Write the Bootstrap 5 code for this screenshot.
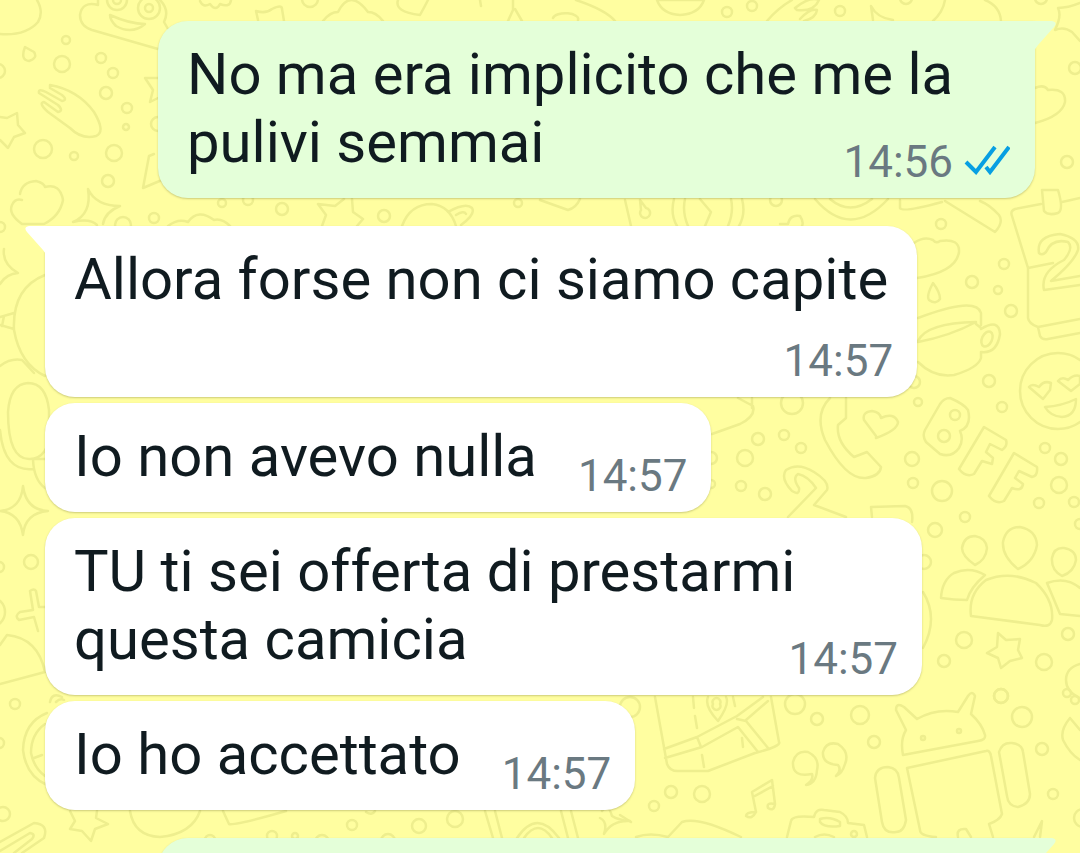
<!DOCTYPE html>
<html lang="it">
<head>
<meta charset="utf-8">
<meta name="viewport" content="width=device-width, initial-scale=1">
<title>Chat</title>
<link rel="stylesheet" href="https://cdn.jsdelivr.net/npm/bootstrap@5.3.0/dist/css/bootstrap.min.css">
<style>
  body { background: #fffea0; font-family: Roboto, "Noto Sans", sans-serif; color: #101b20; }
  .chat { padding: 21px 45px 0; gap: 6px; }
  .wallpaper { z-index: 0; fill: none; stroke: #eeee8e; stroke-width: 2.5; stroke-linejoin: round; stroke-linecap: round; }
  .bubble {
    z-index: 1; padding: 19px 24px 10px 29px; border-radius: 30px;
    max-width: calc(100% - 113px); background: #fff;
    box-shadow: 0 1px 2px rgba(90, 90, 30, .3);
    font-size: 58px; line-height: 68px;
  }
  .bubble-out { background: #e4ffd9; }
  .bubble-out.tailed { border-top-right-radius: 0; }
  .bubble-in.tailed { border-top-left-radius: 0; }
  .tail { top: 0; width: 22px; height: 30px; }
  .bubble-in .tail { right: 100%; margin-right: -2px; fill: #fff; }
  .bubble-out .tail { left: 100%; margin-left: -1px; fill: #e4ffd9; }
  .stamp { font-size: 44px; line-height: 52px; color: #6a7981; }
  .inline-stamp { margin: 28px 0 0 41px; }
  .below-stamp { margin-top: 22px; }
  .stacked p { margin-right: 5px; }
  .turn { margin-top: 22px; }
  .ticks { width: 46px; height: 30px; margin: 0 1px 4px 11px; }
  .upcoming { min-height: 109px; }
</style>
<script src="https://cdn.jsdelivr.net/npm/bootstrap@5.3.0/dist/js/bootstrap.bundle.min.js"></script>
</head>
<body>
<main class="chat position-relative d-flex flex-column align-items-start vh-100 overflow-hidden">

  <svg class="wallpaper position-absolute top-0 start-0 w-100 h-100" viewBox="0 0 1080 853" preserveAspectRatio="xMinYMin slice" aria-hidden="true">
    <!-- scattered bubbles -->
    <g>
      <circle cx="66" cy="40" r="4"/><circle cx="62" cy="64" r="8"/><circle cx="101" cy="58" r="5"/><circle cx="113" cy="73" r="5"/><circle cx="106" cy="93" r="6"/><circle cx="127" cy="108" r="5"/><circle cx="126" cy="127" r="3"/><circle cx="43" cy="149" r="9"/><circle cx="74" cy="156" r="4"/><circle cx="114" cy="153" r="8"/><circle cx="108" cy="181" r="6"/><circle cx="-2" cy="71" r="7"/><circle cx="0" cy="227" r="5"/><circle cx="154" cy="218" r="5"/><circle cx="123" cy="225" r="8"/><circle cx="158" cy="124" r="7"/>
      <circle cx="222" cy="203" r="4"/><circle cx="248" cy="200" r="5"/><circle cx="282" cy="209" r="6"/><circle cx="384" cy="216" r="6"/><circle cx="518" cy="203" r="4"/><circle cx="776" cy="200" r="6"/>
      <circle cx="31" cy="562" r="7"/><circle cx="-1" cy="567" r="5"/><circle cx="-10" cy="612" r="15"/><circle cx="15" cy="704" r="5"/><circle cx="-1" cy="743" r="5"/><circle cx="3" cy="814" r="7"/>
      <circle cx="352" cy="825" r="5"/><ellipse cx="419" cy="826" rx="7" ry="7"/><ellipse cx="455" cy="819" rx="8" ry="8"/><circle cx="272" cy="836" r="5"/><circle cx="295" cy="836" r="3"/><circle cx="322" cy="842" r="7"/><circle cx="388" cy="841" r="7"/><circle cx="210" cy="840" r="5"/>
      <circle cx="310" cy="-1" r="8"/><circle cx="727" cy="12" r="5"/><circle cx="752" cy="6" r="5"/><circle cx="840" cy="11" r="5"/><circle cx="906" cy="-2" r="6"/><circle cx="1041" cy="-2" r="6"/><circle cx="1075" cy="68" r="6"/><circle cx="1067" cy="162" r="6"/>
      <circle cx="941" cy="224" r="5"/><circle cx="1004" cy="264" r="5"/><circle cx="972" cy="282" r="6"/><circle cx="998" cy="290" r="4"/><circle cx="1011" cy="311" r="6"/><circle cx="989" cy="381" r="6"/><circle cx="918" cy="402" r="4"/><circle cx="1002" cy="407" r="5"/><circle cx="914" cy="382" r="6"/>
      <circle cx="792" cy="403" r="11"/><circle cx="758" cy="439" r="6"/><circle cx="784" cy="435" r="5"/><circle cx="801" cy="448" r="5"/><circle cx="745" cy="458" r="8"/><circle cx="741" cy="486" r="5"/><circle cx="765" cy="494" r="6"/><circle cx="711" cy="458" r="6"/><circle cx="711" cy="484" r="4"/><circle cx="912" cy="459" r="7"/><circle cx="913" cy="483" r="5"/><circle cx="942" cy="491" r="10"/><circle cx="965" cy="517" r="5"/><circle cx="935" cy="530" r="7"/><circle cx="1045" cy="448" r="5"/><circle cx="1061" cy="459" r="6"/><circle cx="1059" cy="485" r="8"/><circle cx="1039" cy="503" r="5"/><circle cx="1074" cy="502" r="5"/><circle cx="1080" cy="524" r="5"/>
      <circle cx="924" cy="562" r="7"/><circle cx="964" cy="640" r="8"/><circle cx="944" cy="661" r="6"/><circle cx="1044" cy="662" r="8"/><circle cx="1068" cy="634" r="6"/><circle cx="1001" cy="696" r="7"/><circle cx="1067" cy="693" r="4"/><circle cx="1075" cy="700" r="4"/>
      <circle cx="795" cy="704" r="10"/><circle cx="817" cy="719" r="6"/><circle cx="860" cy="715" r="9"/><circle cx="874" cy="742" r="6"/><circle cx="1001" cy="696" r="7"/><circle cx="1022" cy="717" r="10"/><circle cx="1042" cy="749" r="6"/><circle cx="1053" cy="794" r="5"/><circle cx="630" cy="707" r="10"/><circle cx="671" cy="792" r="6"/><circle cx="654" cy="806" r="5"/><circle cx="702" cy="794" r="8"/><circle cx="1083" cy="818" r="9"/>
    </g>
    <!-- top left: face, hand, star, cloud, sparkle -->
    <path d="M0 34Q26 36 38 22Q44 12 37 0M25 47Q20 60 29 61Q38 58 34 52ZM98 0V5Q82 1 80 15Q80 26 92 30L158 49M110 15Q130 24 145 24Q132 35 116 26Q110 20 110 15ZM160 0Q170 10 164 22L168 29"/>
    <circle cx="117" cy="0" r="10"/><circle cx="117" cy="0" r="4"/><circle cx="149" cy="8" r="11"/><circle cx="149" cy="8" r="4"/>
    <path d="M50 85Q78 90 94 112Q106 132 96 136Q82 140 70 128L48 112Q38 103 44 102L58 112Q64 111 58 105L39 93Q38 88 46 92L62 101Q68 100 62 95L50 88ZM0 117L7 118L17 113L18 125L25 133L14 137L8 148L0 140"/>
    <path d="M158 78H145L153 90L150 102L158 98M154 154L149 156L143 188L162 180M20 194Q22 182 36 181Q44 183 45 187Q60 183 63 200Q60 216 44 224H22Q8 214 12 205Q15 198 22 200M88 189Q96 206 120 206Q105 212 103 224M88 189Q92 214 73 222Q90 218 97 225"/>
    <!-- strip above the first message -->
    <path d="M200 1Q203 8 210 4Q216 12 220 4Q230 8 231 0M258 20L256 11Q266 14 272 9Q282 4 282 9L284 21M323 21Q330 12 338 12Q350-12 368 12Q376 12 383 21M398 0Q394 12 420 15Q424 8 428 0M480 0L481 6M513 0V10L508 21M515 9L522 21M553 18A11 5 0 1 1 578 20M576 0Q606 10 615 21M657 0Q662 14 680 15Q699 14 704 0M657 0H704M767 21Q778 8 792 0M795 8Q810-4 819 0Q814 12 797 10ZM800 19Q810 8 817 10Q816 18 804 21M873 20L871 6Q877 18 893 20M933 21Q943 12 945 0M985 0Q1000 6 1001 21M1080 3Q1068 8 1058 8Q1062 16 1055 30Q1064 26 1072 32L1080 41M1035 88Q1044 84 1048 90Q1066 88 1065 102Q1062 116 1035 123"/>
    <!-- between the first two messages -->
    <path d="M168 226Q178 218 188 222Q198 208 214 220Q222 218 230 226M322 226L326 215L318 204L335 206L344 199M352 199L353 212L363 219L357 226M402 226Q410 204 432 204Q450 206 456 226M448 212Q466 202 472 208Q476 214 461 225M456 215Q464 210 466 214M540 200L568 210Q576 208 580 199M625 200L631 226M640 200L641 210A5 5 0 1 0 646 208ZM674 199Q670 214 677 226M742 199Q746 214 739 226M685 199Q682 212 688 226M731 199Q734 212 728 226M700 199L711 212L705 226M780 224H788Q790 214 800 216Q804 222 802 226M815 199Q850 240 888 199M830 199Q850 216 872 199M900 200V208Q902 213 942 202M945 201L995 232Q1004 222 999 215Q990 205 980 201"/>
    <!-- cloud, drop, cup -->
    <path d="M914 243Q924 236 933 240Q936 244 940 241Q960 238 959 252Q956 272 917 278M933 283Q926 296 929 300Q936 305 940 299Q940 292 933 283ZM918 318Q976 296 981 313V325M918 341Q926 323 976 322Q950 336 918 342M976 324L981 328M918 362Q934 378 954 375Q978 368 981 358V352M981 329Q999 318 1000 334Q997 354 981 352"/>
    <ellipse cx="987" cy="339" rx="5" ry="8" transform="rotate(25 987 339)"/>
    <!-- calendar -->
    <path d="M1041 204L1015 209Q1010 211 1012 216L1028 268V318Q1029 324 1038 327L1040 336Q1042 340 1048 339L1080 333M1028 268L1053 263M1038 327L1080 319M1062 202L1080 198M1042 190H1058Q1064 210 1058 213Q1048 216 1044 211ZM1039 253Q1036 236 1060 234Q1080 238 1078 250Q1074 262 1051 281L1080 276M1080 285L1044 290Q1040 272 1064 260Q1074 248 1068 242Q1052 238 1046 252Q1042 256 1039 253"/>
    <!-- heart-eyed face -->
    <circle cx="1058" cy="391" r="38"/>
    <path d="M1029 387Q1032 383 1039 387Q1044 380 1051 383L1050 390L1043 399ZM1058 381Q1062 376 1068 380Q1074 374 1080 376V384L1071 391ZM1045 407Q1062 406 1076 399Q1076 416 1062 417Q1050 416 1045 407Z"/>
    <!-- phone, heart, BFF, cane -->
    <path d="M712 434L740 424Q756 416 753 406L738 398M752 398V408M830 398Q814 414 825 440Q846 480 866 478Q880 476 881 467L867 452L854 457Q836 442 838 425L846 418V398M876 436L864 420Q862 412 872 411Q880 412 881 418Q894 412 898 422Q898 430 876 438ZM925 430Q922 436 926 442L940 454Q952 458 959 448Q964 440 960 431Q972 426 968 410Q964 404 950 398Q944 398 940 404ZM984 427L1006 440Q1008 446 1002 450L990 444L986 452L993 458L992 464L982 461L974 474Q966 478 959 469ZM1014 453L1037 467Q1038 476 1032 477L1019 471L1015 478L1023 484Q1022 492 1012 488L1004 501Q996 505 989 496ZM788 517L816 488Q808 476 798 474Q792 478 799 488Q800 496 792 491Q780 478 786 470Q798 462 814 472Q830 482 827 490L814 505L846 517M872 517L871 507L905 506Q914 508 912 522"/>
    <circle cx="955" cy="415" r="5"/><circle cx="944" cy="436" r="6"/>
    <!-- people and star -->
    <path d="M975 565Q962 556 962 548Q964 536 975 536Q986 538 987 548Q986 560 975 565ZM1018 569Q1002 556 1003 542Q1006 527 1020 527Q1036 530 1037 545Q1034 562 1018 569ZM1062 576Q1051 570 1052 558Q1054 547 1064 548Q1076 550 1076 560Q1074 572 1062 576ZM941 598Q942 580 954 573Q970 566 985 575Q970 588 967 600Q954 600 941 598ZM971 616Q968 594 986 580Q1010 570 1036 583Q1054 600 1052 620Q1050 628 1040 625ZM1080 588Q1066 576 1047 583L1060 614L1080 616M998 633L1006 640L1020 639L1018 650L1022 658L1010 661L1001 668L998 658L987 653L997 647ZM923 592Q939 618 923 648M1080 664Q1066 668 1066 680Q1066 692 1080 698"/>
    <!-- map -->
    <path d="M655 697L667 764Q670 772 680 771L708 771L755 753Q782 746 779 742L771 697M664 749L697 737L737 716L763 697M665 758L702 747L738 727L758 752M737 719L746 721L768 748M746 720L768 701M697 737L701 747M693 697L694 708M695 716L697 728M733 697L735 706M742 738L743 747M702 755L704 767M708 697Q704 706 718 721Q730 704 726 697M713 704A4 4 0 1 0 720 704A4 4 0 1 0 713 704"/>
    <!-- quotes, notes, camera -->
    <path d="M806 785Q814 780 812 774Q792 778 793 762Q796 750 808 752Q820 758 817 770Q816 784 806 785ZM836 776Q842 770 838 765Q822 764 823 752Q826 741 838 744Q850 752 845 764Q842 774 836 776ZM756 812L752 792L772 780L775 804M753 797L773 786M756 812Q746 812 746 816Q752 820 756 812M775 804Q766 802 768 808Q774 812 775 804M636 837Q650 832 668 837L682 822Q698 816 741 837M620 815L631 822M787 837L791 821Q792 815 814 817Q816 808 824 810L840 812Q848 816 848 823L864 825L867 837M820 819Q830 816 840 822V826Q824 828 820 822ZM815 837Q824 832 834 837"/>
    <circle cx="854" cy="834" r="3"/>
    <!-- robot -->
    <path d="M903 755Q900 740 906 730L896 710Q896 702 904 707L917 719Q936 708 958 712L968 696Q972 690 975 696L971 714Q982 724 985 735Q986 740 978 741ZM907 768L986 751Q990 750 991 756L1002 814Q1000 820 989 824L993 837M907 768L920 830Q920 836 936 837M875 778Q876 767 888 767Q898 768 899 778L906 820Q904 832 896 832Q884 834 882 822ZM999 752Q1002 742 1012 743Q1022 744 1023 752L1030 794Q1030 804 1018 807Q1008 806 1007 796ZM958 837Q956 828 966 829L971 837M1034 837L1042 821L1040 837M1070 718Q1060 730 1063 740Q1070 754 1080 760M1070 718L1080 730"/>
    <circle cx="923" cy="738" r="2"/><circle cx="959" cy="731" r="2"/>
    <!-- left margin -->
    <path d="M45 275Q12 288 14 330Q20 364 45 376M4 249Q2 264 18 273Q6 274 0 284M0 317L14 313M0 325L14 329M4 316L2 326M0 366Q10 358 22 360L34 373M28 383Q10 384 8 412Q8 460 30 459Q48 458 49 434V410Q46 383 28 383ZM0 430Q4 472 33 469M33 459H45M33 460Q34 480 45 488M23 486Q26 510 48 511Q25 513 23 535Q20 513 0 511Q21 509 23 486ZM45 607H39L36 591Q34 588 30 591L33 610L20 612Q14 616 19 620L34 617L38 631M0 645L7 635Q38 638 45 672L0 684M47 713Q24 722 23 750Q26 776 47 785M45 724Q31 734 31 753Q34 768 45 776M34 758L42 755M0 842L34 823Q49 824 44 838L22 853M0 851L30 833Q36 834 32 839L14 853M50 702Q52 692 62 697M56 702Q60 698 64 700"/>
    <!-- strip above the last message -->
    <path d="M70 811L75 821L70 829L82 831L91 841L95 829L108 824L96 818L97 811M130 811Q134 836 160 837Q192 834 200 811M223 811L229 824Q234 826 286 811M366 812Q372 816 375 811M485 811L493 838M495 811L502 838M561 811L568 838M571 811L578 838M517 838Q537 808 559 838M524 838Q538 818 552 838M602 811Q608 802 612 816Q618 820 630 821Q612 820 604 834Q608 822 600 818"/>
  </svg>

  <article class="bubble bubble-out tailed position-relative align-self-end">
    <svg class="tail position-absolute" viewBox="0 0 22 30" aria-hidden="true"><path d="M0 0H18Q24 1 20 6L4 24Q1 28 0 30Z"/></svg>
    <p class="mb-0 clearfix">No ma era implicito che me la pulivi semmai <span class="stamp inline-stamp float-end d-flex align-items-center"><time>14:56</time><svg class="ticks" viewBox="0 0 46 30" fill="none" stroke="#079fe2" stroke-width="4" role="img" aria-label="Letto"><path d="M2 17L12 27L31 2M22 22L26 27L45 2"/></svg></span></p>
  </article>

  <article class="bubble bubble-in tailed stacked turn position-relative d-flex flex-column">
    <svg class="tail position-absolute" viewBox="0 0 22 30" aria-hidden="true"><path d="M22 0H4Q-2 1 2 6L18 24Q21 28 22 30Z"/></svg>
    <p class="mb-0">Allora forse non ci siamo capite</p>
    <time class="stamp below-stamp align-self-end">14:57</time>
  </article>

  <article class="bubble bubble-in position-relative">
    <p class="mb-0 clearfix">Io non avevo nulla <time class="stamp inline-stamp float-end">14:57</time></p>
  </article>

  <article class="bubble bubble-in position-relative">
    <p class="mb-0 clearfix">TU ti sei offerta di prestarmi questa camicia <time class="stamp inline-stamp float-end">14:57</time></p>
  </article>

  <article class="bubble bubble-in position-relative">
    <p class="mb-0 clearfix">Io ho accettato <time class="stamp inline-stamp float-end">14:57</time></p>
  </article>

  <article class="bubble bubble-out tailed upcoming turn position-relative align-self-end w-100 flex-shrink-0">
    <svg class="tail position-absolute" viewBox="0 0 22 30" aria-hidden="true"><path d="M0 0H18Q24 1 20 6L4 24Q1 28 0 30Z"/></svg>
  </article>
</main>
</body>
</html>
